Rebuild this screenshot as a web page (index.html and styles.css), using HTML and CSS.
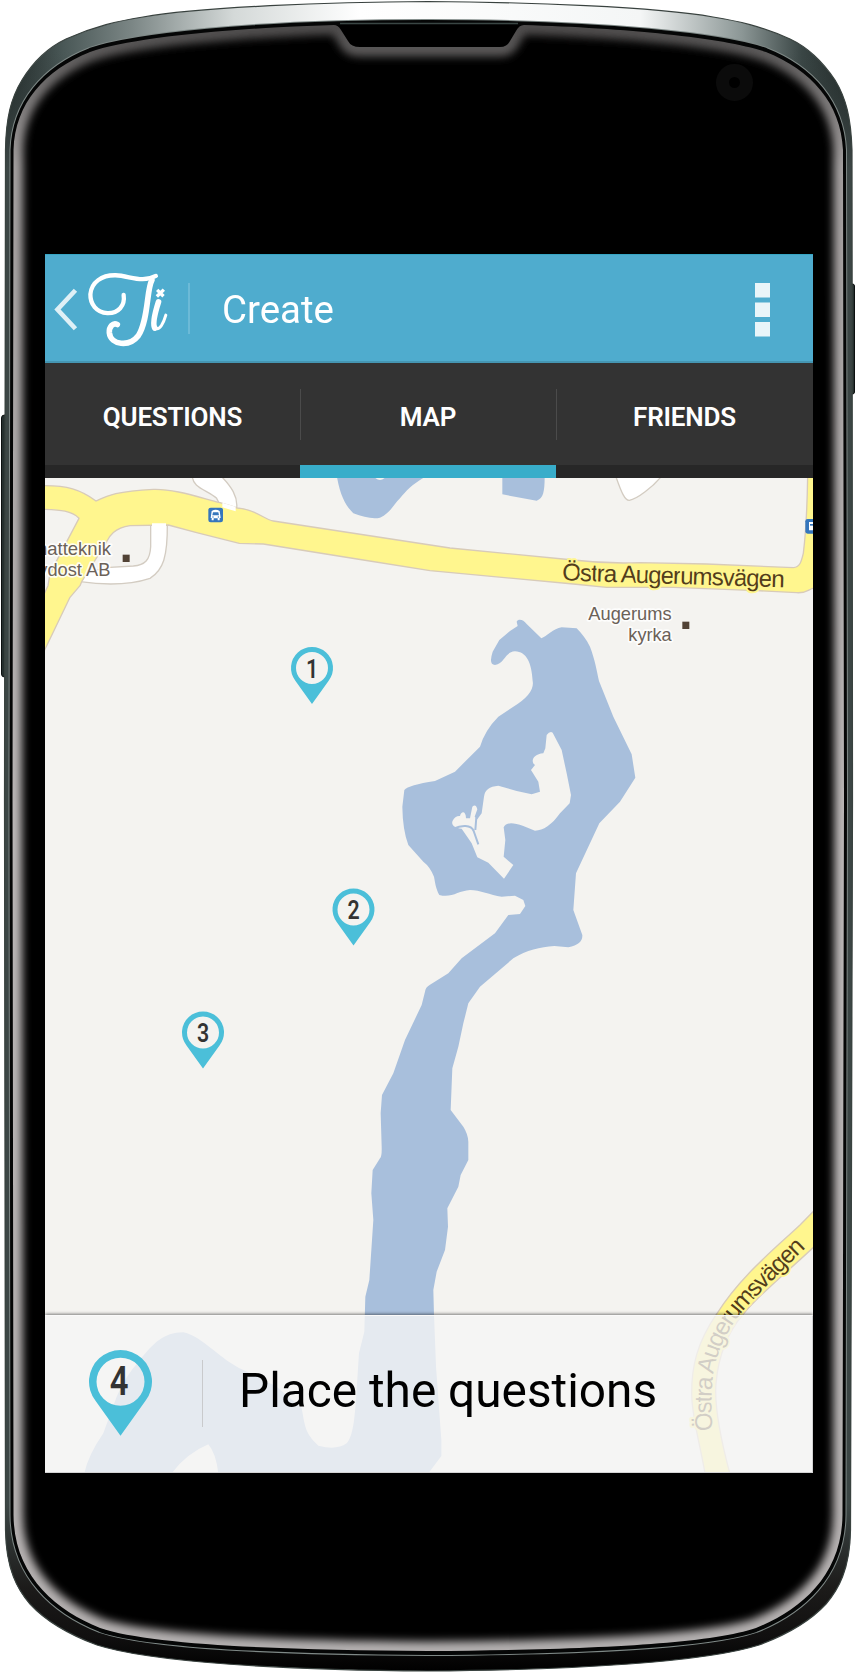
FILE: index.html
```html
<!DOCTYPE html>
<html lang="en">
<head>
<meta charset="utf-8">
<title>Create</title>
<link rel="stylesheet" href="styles.css">
</head>
<body>
<main class="phone">
  <svg class="phone-body" viewBox="0 0 856 1672" aria-hidden="true">
    <defs>
      <linearGradient id="metal" x1="0" x2="1" y1="0" y2="0">
        <stop offset="0" stop-color="#1c2423"/><stop offset=".07" stop-color="#4a5857"/><stop offset=".15" stop-color="#7b8685"/><stop offset=".27" stop-color="#d4d9d8"/><stop offset=".42" stop-color="#fff"/><stop offset=".75" stop-color="#f4f6f6"/><stop offset=".87" stop-color="#8b9695"/><stop offset=".94" stop-color="#3a4645"/><stop offset="1" stop-color="#1c2423"/>
      </linearGradient>
      <linearGradient id="shade" x1="0" x2="0" y1="0" y2="1">
        <stop offset=".03" stop-color="#3c4645" stop-opacity="0"/><stop offset=".1" stop-color="#3c4645"/><stop offset=".9" stop-color="#3c4645"/><stop offset=".95" stop-color="#1c1b1a"/><stop offset=".98" stop-color="#100f0f"/><stop offset="1" stop-color="#000"/>
      </linearGradient>
      <linearGradient id="glowTone" gradientUnits="userSpaceOnUse" x1="0" x2="0" y1="20" y2="1650">
        <stop offset="0" stop-color="#4a4848"/><stop offset=".03" stop-color="#666464"/><stop offset=".09" stop-color="#a4a0a0"/><stop offset=".5" stop-color="#bcb8b8"/><stop offset="1" stop-color="#b4b0b0"/>
      </linearGradient>
      <path id="glass" d="M334 25C230 28 130 38 90 52C45 70 15 103 13.500 150L12.500 800L13.500 1515C14 1575 55 1610 100 1628C150 1645 280 1650 428 1651C576 1650 706 1645 756 1628C801 1610 842 1575 842.500 1515L844 800L843 150C841 103 811 70 766 52C726 38 626 28 524 25Q519 25 516 31L510 41Q507 47 500 47H360Q351 47 348 41L341 30Q338 25 334 25Z"/>
      <path id="rim" d="M428 22C250 22 130 36 90 50C44 68 14 103 12.500 150L11.500 800L12.500 1515C13 1577 55 1612 100 1630C150 1647 280 1652 428 1653C576 1652 706 1647 756 1630C801 1612 843 1577 843.500 1515L845 800L844 150C842 103 812 68 766 50C726 36 606 22 428 22Z"/>
      <clipPath id="glassClip"><use href="#glass"/></clipPath>
      <filter id="soft" x="-5%" y="-5%" width="110%" height="110%"><feGaussianBlur stdDeviation="4.500"/></filter>
      <path id="shell" d="M428 1.500C330 2 200 7 143 17C118 21 95 26 66 39C49 47 33 62 22 80C11 98 6 118 5.500 150L4.500 800L5.500 1530C6 1570 18 1590 30 1604C42 1617 62 1632 97 1645C150 1662 280 1670 428 1671C576 1670 706 1662 759 1645C794 1632 814 1617 826 1604C838 1590 850 1570 850.500 1530L852.500 800L852 150C851 118 846 98 835 80C823 62 807 47 790 39C761 26 738 21 713 17C656 7 526 2 428 1.500Z"/>
    </defs>
    <rect class="side-key" x="1.500" y="415" width="6" height="262" rx="3"/>
    <rect class="side-key" x="850" y="284" width="4.500" height="110" rx="2"/>
    <use href="#shell" fill="url(#metal)"/>
    <use href="#shell" fill="url(#shade)"/>
    <use href="#shell" class="shell-edge"/>
    <use href="#rim" class="rim-light"/>
    <use href="#rim" class="rim-dark"/>
    <path class="ear-lip" d="M340 23.500H518"/>
    <use href="#glass" fill="#000"/>
    <g clip-path="url(#glassClip)"><use href="#glass" class="glow" filter="url(#soft)"/></g>
    <circle cx="734.500" cy="82.500" r="12" class="camera"/>
  </svg>

  <div class="screen">
    <header class="bar">
      <svg class="brand" viewBox="45 40 390 325" role="img" aria-label="Back to Ti">
        <path class="back" d="M136 149L82 207L136 265"/>
        <path class="logo" d="M281 163C286 196 265 219 232 218C199 216 180 190 181 161C184 125 215 103 257 104C300 106 337 128 378 106"/>
        <path class="logo logo-stem" d="M366 119C350 145 356 240 325 286C299 320 242 315 238 277C237 258 249 246 262 252"/>
        <path class="logo logo-stem" d="M386 184C377 212 366 249 375 263"/>
        <path class="logo logo-i" d="M375 263C390 273 402 245 408 224"/>
        <path class="logo logo-cross" d="M382 148L401 167M402 147L381 168"/>
      </svg>
      <span class="rule"></span>
      <h1 class="title">Create</h1>
      <svg class="more" viewBox="0 0 15 54" aria-label="More"><path d="M0 0h15v14.500H0zM0 19.500h15v14.500H0zM0 39h15v14.500H0z"/></svg>
    </header>
    <nav class="tabs">
      <a class="tab">QUESTIONS</a>
      <a class="tab tab-active">MAP</a>
      <a class="tab">FRIENDS</a>
    </nav>
    <section class="map-area">
      <svg class="map" viewBox="45 478 768 995">
        <defs>
          <path id="pin" fill-rule="evenodd" d="M0 108L-50 38A63 63 0 1 1 50 38ZM0 -48A48 48 0 1 0 0 48A48 48 0 1 0 0 -48Z"/>
          <path id="bend" d="M218 722C215 690 212 620 219 560C228 490 262 415 310 362C370 294 430 240 515 156"/>
        </defs>
        <g transform="translate(30 470) scale(.33333)">
          <path class="street" d="M487 15C485 55 535 60 560 85L575 115H620C624 80 605 50 570 15Z"/>
          <path class="street" d="M362 160V230C360 270 345 285 310 288L240 292L150 310V335C220 345 300 345 360 325C400 300 413 260 412 160Z"/>
          <path class="street" d="M1756 15C1775 70 1785 92 1798 91C1820 88 1870 50 1895 18Z"/>
          <path class="road" d="M20 47H45C110 47 150 58 198 93C235 76 260 64 370 58C430 56 500 80 570 98L622 114C680 118 700 148 730 153L1260 234L1630 270Q1730 282 1830 278L2030 282L2290 293C2310 292 2314 275 2320 250Q2331 160 2333 15H2370V355H2349C2335 358 2330 370 2300 368L2180 362L1930 352L1730 352L1630 342L1200 302L1000 270L700 222L628 220L500 188L415 165L300 167C250 175 238 200 230 215L155 335L150 347L120 382L20 590V420L54 347L60 310L147 145C125 122 90 120 45 118H20Z"/>
          <path d="M366 160H408V175H366ZM577 98L617 110V124L577 112Z" fill="#fff"/>
          <path class="water" d="M920 15C930 80 950 110 970 130C1000 142 1030 148 1050 143C1080 130 1090 105 1110 85C1130 60 1150 40 1190 18ZM1417 15V73L1520 92C1542 85 1544 60 1544 15Z"/>
          <path d="M1034 22Q1050 38 1066 22Z" fill="#f4f3f0"/>
        </g>
        <g transform="translate(380 610) scale(.33333)">
          <path class="water" d="M410 35C415 25 430 28 440 42L484 85C500 80 520 55 545 52L590 55C605 70 620 90 630 110C645 150 650 180 657 213L700 320L755 433L766 503L720 575L658 640L588 790L580 900L607 975C608 995 595 1005 565 1012L523 1008C480 1012 440 1020 400 1045L300 1130L265 1180L250 1240L235 1310L217 1375L212 1500L250 1550Q264 1572 265 1595V1650L242 1695L235 1730L202 1795L204 1850L195 1920L170 1985L160 2040L162 2115L168 2270L184 2490V2538L145 2590H-485Q-492 2530 -515 2503Q-580 2530 -625 2590H-887Q-875 2535 -830 2470L-790 2360Q-765 2300 -720 2250C-680 2200 -650 2168 -590 2167C-530 2180 -480 2250 -410 2280L-310 2330L-235 2395C-225 2450 -225 2470 -185 2507Q-130 2522 -100 2500C-80 2480 -76 2420 -72 2370L-63 2230L-47 2165L-44 2060L-32 2010L-20 1830L-26 1750L-22 1680L0 1645Q6 1640 5 1610L2 1510L6 1455L40 1390L75 1290L125 1185L135 1145Q136 1132 150 1124L205 1090L245 1045L345 970L385 915L420 912L436 888L430 870L405 857L365 860C330 855 300 840 270 840C235 842 215 865 178 855C167 835 166 820 162 800Q150 770 130 755L85 705Q68 660 67 590L73 540Q85 525 165 513L225 485L300 410Q315 360 355 320L400 290Q465 250 458 213C455 160 440 125 405 124C375 125 375 160 345 165Q325 165 338 125L358 90L390 63L413 48Z"/>
          <path class="land" d="M500 375Q510 362 518 368L545 420L560 490L573 555L569 580L540 610C515 645 490 662 465 662L430 648Q380 630 371 652L376 690L371 740L400 765L372 806L325 758L292 742L275 700L245 656C225 655 212 645 218 632Q225 617 240 618C244 602 258 603 258 625H270L277 590Q288 580 292 598L284 620L292 628L305 610L312 560Q315 530 355 527L410 543L455 553L480 545L475 515L453 480L465 465C450 455 460 432 490 430L496 415Z"/>
          <path class="creek" d="M220 656C245 645 273 644 281 663L295 703M289 622L286 660"/>
        </g>
        <g transform="translate(640 1190) scale(.33333)">
          <path class="road" d="M535 49L480 105C400 180 300 260 230 372C170 460 155 530 155 610C155 680 180 760 197 860H272C245 760 222 650 228 580C235 500 260 430 310 372C370 300 450 240 535 158Z"/>
          <text class="road-name"><textPath href="#bend" textLength="650">Östra Augerumsvägen</textPath></text>
        </g>
        <g transform="translate(440 460) scale(.33333)">
          <text class="road-name" transform="rotate(1.800 366 360)" x="366" y="361" textLength="668">Östra Augerumsvägen</text>
          <text class="place" x="445" y="481" textLength="250" lengthAdjust="spacingAndGlyphs">Augerums</text>
          <text class="place" x="565" y="542" textLength="130" lengthAdjust="spacingAndGlyphs">kyrka</text>
          <rect class="spot" x="727" y="485" width="21" height="22"/>
          <g transform="translate(1096 177)"><rect class="stop" width="44" height="44" rx="7"/><path d="M11 9H34V34H29V40H23V34H11Z" fill="#fff"/><path d="M14 15H34V20H14Z" fill="#3576bd"/></g>
        </g>
        <g transform="translate(30 470) scale(.33333)">
          <text class="place" x="21" y="256" textLength="222" lengthAdjust="spacingAndGlyphs">natteknik</text>
          <text class="place" x="25" y="317" textLength="216" lengthAdjust="spacingAndGlyphs">ydost AB</text>
          <rect class="spot" x="278" y="254" width="21" height="22"/>
          <g transform="translate(535 113)"><rect class="stop" width="44" height="44" rx="7"/><path d="M10 10Q22 3 34 10L37 31H34V38H28V32H16V38H10V31H7Z" fill="#fff"/><path d="M14 14H30L32 23H12Z" fill="#3576bd"/><circle cx="14" cy="28" r="2" fill="#3576bd"/><circle cx="30" cy="28" r="2" fill="#3576bd"/></g>
        </g>
        <g class="marker" transform="translate(312 668) scale(.33333)"><use href="#pin"/><text transform="scale(.8 1)" y="29">1</text></g>
        <g class="marker" transform="translate(353.500 909.500) scale(.33333)"><use href="#pin"/><text transform="scale(.8 1)" y="29">2</text></g>
        <g class="marker" transform="translate(203 1032.500) scale(.33333)"><use href="#pin"/><text transform="scale(.8 1)" y="29">3</text></g>
      </svg>
      <footer class="prompt">
        <svg class="prompt-pin marker" viewBox="-63 -63 126 173"><use href="#pin"/><text transform="translate(-3) scale(.82 1)" y="27">4</text></svg>
        <span class="prompt-rule"></span>
        <p class="prompt-text">Place the questions</p>
      </footer>
    </section>
  </div>
</main>
</body>
</html>
```
FILE: styles.css
```css
* { box-sizing: border-box; }
body { margin: 0; background: #fff; font-family: Roboto, "Noto Sans", sans-serif; }
.phone { position: relative; width: 856px; height: 1672px; padding: 254px 43px 0 45px; overflow: hidden; }
.phone-body { position: absolute; inset: 0; width: 856px; height: 1672px; }
.side-key { fill: #26302f; stroke: #0c1010; }
.shell-edge { fill: none; stroke: #39423f; stroke-width: 1.2; }
.rim-light { fill: none; stroke: #7f8987; stroke-width: 6; }
.rim-dark { fill: #000; stroke: #050606; stroke-width: 4; }
.ear-lip { fill: none; stroke: #3a4644; stroke-width: 1.500; }
.glow { fill: none; stroke: url(#glowTone); stroke-width: 19; }
.camera { fill: none; stroke: #0b0b0b; stroke-width: 13; }

.screen { position: relative; display: flex; flex-direction: column; width: 768px; height: 1219px; }
.bar { display: flex; align-items: center; height: 109px; padding-right: 43px; background: #4facce; border-top: 1px solid #36a5c3; border-bottom: 2px solid #4596b3; }
.brand { flex: none; width: 130px; height: 108px; }
.back { fill: none; stroke: #dff0f6; stroke-width: 14; }
.logo { fill: none; stroke: #fff; stroke-width: 13; stroke-linecap: round; }
.logo-stem { stroke-width: 17; }
.logo-i { stroke-width: 9; }
.logo-cross { stroke-width: 10; stroke-linecap: butt; }
.rule { width: 2px; height: 51px; margin-left: 13px; background: #6cbad7; }
.title { margin: 3px 0 0 32px; color: #fff; font-size: 39px; line-height: 46px; font-weight: 400; transform: scaleX(.985); transform-origin: left; }
.more { width: 15px; height: 54px; margin: 3px 0 0 auto; fill: #e9f5f9; }
.tabs { display: grid; grid-template-columns: 255px 256px 257px; height: 115px; background: #333; }
.tab { position: relative; display: flex; align-items: center; justify-content: center; padding: 6px 0 0; border-bottom: 13px solid #272727; color: #fff; font-size: 26px; font-weight: 600; letter-spacing: -.2px; }
.tab-active { border-color: #38adca; }
.tab + .tab::before { content: ""; position: absolute; left: 0; top: 26px; width: 1px; height: 51px; background: #4b4b4b; }
.map-area { position: relative; flex: 1; background: #f4f3f0; overflow: hidden; }
.map { display: block; width: 768px; height: 995px; }
.water { fill: #a8bfdc; }
.land { fill: #f4f3f0; }
.creek { fill: none; stroke: #a8bfdc; stroke-width: 6; }
.road { fill: #fff68e; stroke: #d8cbb9; stroke-width: 4; stroke-linejoin: round; }
.street { fill: #fff; stroke: #d3ccc2; stroke-width: 4; }
.road-name { font: 73px "Liberation Sans", sans-serif; fill: #533d1b; stroke: #fff68e; stroke-width: 12; stroke-linejoin: round; paint-order: stroke; }
.place { font: 55px "Liberation Sans", sans-serif; fill: #6b6158; stroke: #fff; stroke-opacity: .85; stroke-width: 10; stroke-linejoin: round; paint-order: stroke; }
.spot { fill: #514235; }
.stop { fill: #3576bd; }
.marker { fill: #4bbfd9; }
.marker text { fill: #333; font: 600 80px Roboto, sans-serif; text-anchor: middle; }
.prompt { position: absolute; inset: 837px 0 0; display: flex; align-items: center; border: 1px solid #d3d3d4; border-top-color: #fafafa; border-left: 0; background: rgba(245, 245, 245, .79); box-shadow: 0 -1px 3px rgba(0, 0, 0, .5); }
.prompt-pin { width: 63px; height: 87px; margin: 0 0 2px 44px; }
.prompt-rule { width: 1px; height: 67px; margin: 0 0 2px 50px; background: #c9cacc; }
.prompt-text { margin: 0 0 7px 36px; color: #000; font-size: 49px; line-height: 58px; white-space: nowrap; transform: scaleX(.975); transform-origin: left; }
```
